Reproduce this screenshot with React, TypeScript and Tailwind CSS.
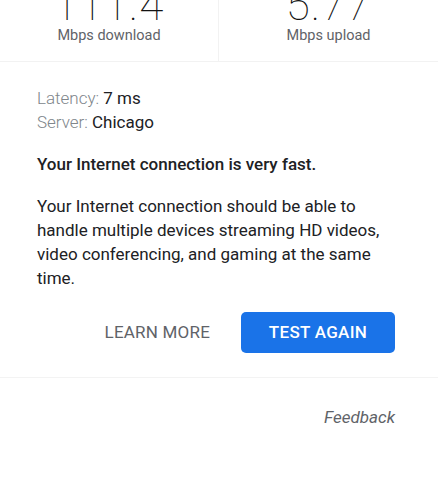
export default function App() {
  return (
    <div className="w-[438px] h-[500px] overflow-hidden bg-white text-[#202124]" style={{ fontFamily: "Roboto, 'Liberation Sans', sans-serif" }}>
      {/* speeds */}
      <div className="grid grid-cols-2 h-[62px] border-b border-[#f2f2f2]">
        <div className="flex flex-col items-center border-r border-[#f2f2f2]">
          <div className="text-[44px] leading-[44px] font-thin text-[#111] mt-[-17px] tracking-[1px]">111.4</div>
          <div className="text-[14.5px] leading-[20px] text-[#5f6368] mt-[-1px]">Mbps download</div>
        </div>
        <div className="flex flex-col items-center">
          <div className="text-[44px] leading-[44px] font-thin text-[#111] mt-[-17px] tracking-[1px]">5.77</div>
          <div className="text-[14.5px] leading-[20px] text-[#5f6368] mt-[-1px]">Mbps upload</div>
        </div>
      </div>

      {/* details */}
      <div className="pl-[37px] pr-[43px] pt-[24px] pb-[24px] border-b border-[#f3f3f3]">
        <div className="text-[17px] leading-[24px]">
          <p>
            <span className="font-light text-[#80868b]">Latency: </span>7 ms
          </p>
          <p>
            <span className="font-light text-[#80868b]">Server: </span>Chicago
          </p>
        </div>
        <p className="mt-[18px] text-[17px] leading-[24px] font-medium">Your Internet connection is very fast.</p>
        <p className="mt-[18px] text-[17px] leading-[24px]">
          Your Internet connection should be able to handle multiple devices streaming HD videos, video conferencing, and gaming at the same time.
        </p>
        <div className="mt-[22px] flex items-center justify-end gap-[31px]">
          <button className="text-[17px] font-normal text-[#5f6368] tracking-[0.2px]">LEARN MORE</button>
          <button className="h-[41px] w-[154px] rounded-[5px] bg-[#1a73e8] text-white text-[17px] font-medium tracking-[0.3px]">
            TEST AGAIN
          </button>
        </div>
      </div>

      <div className="pr-[43px] pt-[27px] flex justify-end">
        <span className="italic text-[17px] leading-[24px] text-[#5f6368]">Feedback</span>
      </div>
    </div>
  )
}
